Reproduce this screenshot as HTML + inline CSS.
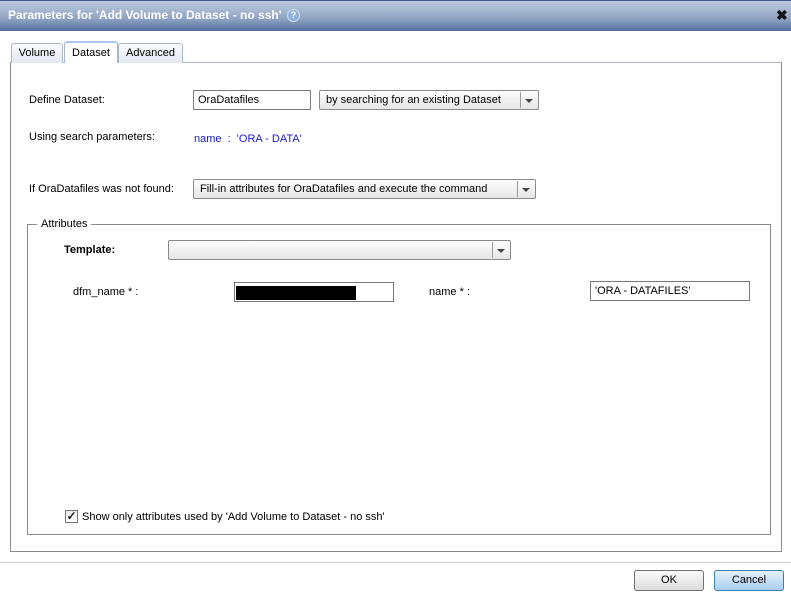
<!DOCTYPE html>
<html><head><style>
*{box-sizing:border-box;margin:0;padding:0}
body{width:791px;height:594px;background:#fff;font-family:"Liberation Sans",sans-serif;font-size:11px;color:#000;position:relative;overflow:hidden}
.a{position:absolute;white-space:nowrap}
.title{left:0;top:0;width:791px;height:31px;background:linear-gradient(#bccadf,#8fa3c2 60%,#5470a0);border-top:1px solid #3e5a86}
.tab{position:absolute;top:43px;height:20px;border:1px solid #a9b8cc;border-bottom:none;background:linear-gradient(#fafbfd,#e3e8ef);border-radius:3px 3px 0 0;text-align:center;line-height:18px;font-size:11px}
.inp{position:absolute;border:1px solid #7a7a7a;background:#fff;height:20px;padding-left:4px;line-height:18px}
.sel{position:absolute;border:1px solid #8a8a8a;border-radius:2px;background:linear-gradient(#fdfdfd,#e6e6e6);height:20px;padding-left:6px;line-height:18px}
.sel:after{content:"";position:absolute;right:5px;top:8px;border:4px solid transparent;border-top:4px solid #444;border-bottom:none}
.sel .d{position:absolute;right:17px;top:1px;bottom:1px;border-left:1px solid #9a9a9a}
.btn{position:absolute;top:570px;height:21px;border:1px solid #707070;border-radius:3px;text-align:center;line-height:19px;font-size:11px}
</style></head><body>
<div class="a title"></div>
<div class="a" style="left:8px;top:8px;color:#fff;font-weight:bold;font-size:12px">Parameters for 'Add Volume to Dataset - no ssh'</div>
<div class="a" style="left:287px;top:9px;width:13px;height:13px;border-radius:50%;background:#8fb1dc;border:1px solid #d0def0;color:#fff;font-size:9px;font-weight:bold;text-align:center;line-height:11px">?</div>
<div class="a" style="left:776px;top:7px;color:#111;font-weight:bold;font-size:14px">✖</div>

<div class="a" style="left:10px;top:62px;width:772px;height:490px;border:1px solid #8a8a8a;border-top-color:#a9b8cc"></div>
<div class="tab" style="left:11px;width:52px">Volume</div>
<div class="tab" style="left:64px;width:54px;top:41px;height:22px;background:#fff;border-top:2px solid #a9c9ef;line-height:20px">Dataset</div>
<div class="tab" style="left:118px;width:65px">Advanced</div>

<div class="a" style="left:29px;top:94px">Define Dataset:</div>
<div class="inp" style="left:193px;top:90px;width:118px">OraDatafiles</div>
<div class="sel" style="left:319px;top:90px;width:220px">by searching for an existing Dataset<span class="d"></span></div>

<div class="a" style="left:29px;top:131px">Using search parameters:</div>
<div class="a" style="left:194px;top:133px;color:#1a1ad0">name &nbsp;: &nbsp;'ORA - DATA'</div>

<div class="a" style="left:29px;top:183px">If OraDatafiles was not found:</div>
<div class="sel" style="left:193px;top:179px;width:343px">Fill-in attributes for OraDatafiles and execute the command<span class="d"></span></div>

<div class="a" style="left:27px;top:224px;width:744px;height:311px;border:1px solid #8a8a8a"></div>
<div class="a" style="left:37px;top:218px;background:#fff;padding:0 4px">Attributes</div>

<div class="a" style="left:64px;top:244px;font-weight:bold">Template:</div>
<div class="sel" style="left:168px;top:240px;width:343px"><span class="d"></span></div>

<div class="a" style="left:73px;top:286px">dfm_name * :</div>
<div class="inp" style="left:234px;top:282px;width:160px"><div style="position:absolute;left:1px;top:3px;width:120px;height:14px;background:#000"></div></div>
<div class="a" style="left:429px;top:286px">name * :</div>
<div class="inp" style="left:590px;top:281px;width:160px">'ORA - DATAFILES'</div>

<div class="a" style="left:65px;top:510px;width:13px;height:13px;border:1px solid #777;background:linear-gradient(#e8e8e8,#fff);font-size:12px;line-height:10px;text-align:center;font-weight:bold;color:#222">✓</div>
<div class="a" style="left:82px;top:511px">Show only attributes used by 'Add Volume to Dataset - no ssh'</div>

<div class="a" style="left:0;top:562px;width:791px;height:1px;background:#cfcfcf"></div>
<div class="btn" style="left:634px;width:70px;background:linear-gradient(#fafafa,#dcdcdc)">OK</div>
<div class="btn" style="left:714px;width:70px;background:linear-gradient(#e6f1fb,#a9cdf0);border-color:#3c7fb1">Cancel</div>
</body></html>
